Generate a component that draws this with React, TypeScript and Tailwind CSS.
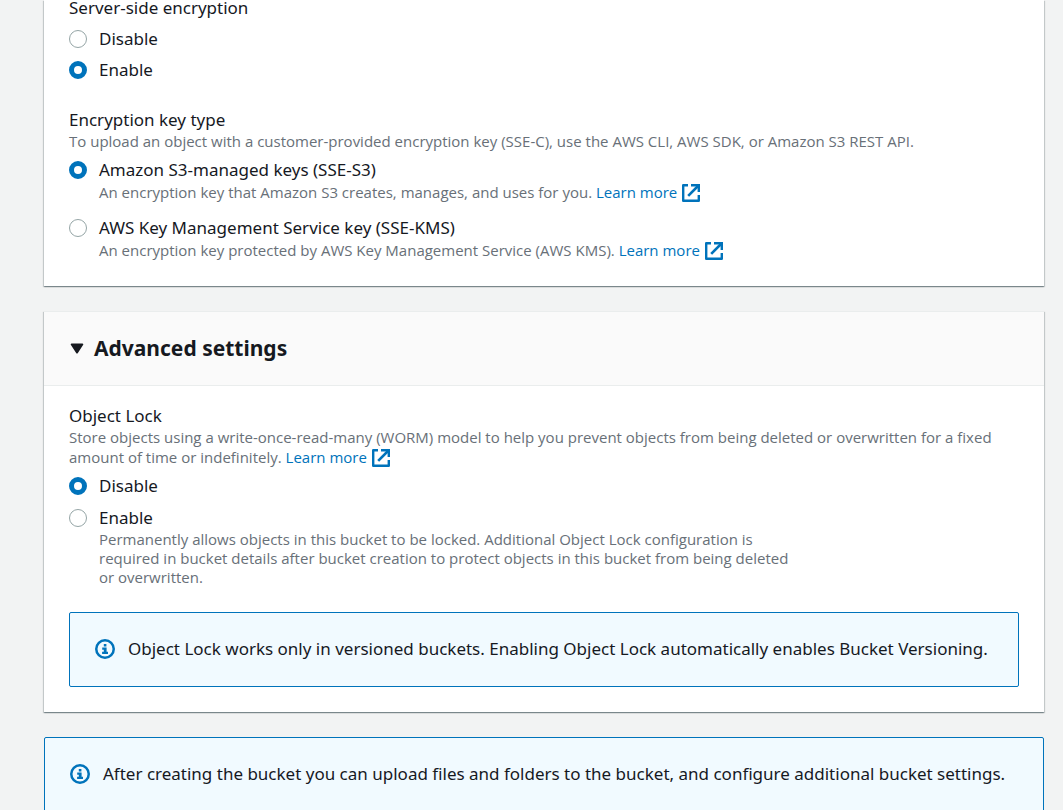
import React from 'react';

function ExternalIcon() {
  return (
    <svg aria-hidden="true" viewBox="0 0 18 18" className="ml-[5px] inline-block size-[18px] align-[-4px]" fill="none" stroke="currentColor" strokeWidth="2.4">
      <path d="M6 1.200H1.200v15.600h15.600V11" strokeLinejoin="round" />
      <path d="M9 1.200h7.800V8" />
      <path d="M16.500 1.500 6.200 11.800" strokeWidth="2.600" />
    </svg>
  );
}

function InfoIcon() {
  return (
    <svg aria-hidden="true" viewBox="0 0 20 20" className="size-5 shrink-0 text-[#0073bb]" fill="none" stroke="currentColor">
      <circle cx="10" cy="10" r="8.750" strokeWidth="2.500" />
      <path d="M8.800 5h2.600v2.400H8.800zM7.200 8.500h4.400v4.300h1.400V15H7.100v-2.200h1.700v-2.100H7.200z" fill="currentColor" stroke="none" />
    </svg>
  );
}

function LearnMore() {
  return (
    <a href="#learn-more" className="whitespace-nowrap text-[#0073bb]">
      Learn more
      <ExternalIcon />
    </a>
  );
}

interface RadioProps {
  name: string;
  id: string;
  label: string;
  checked?: boolean;
  hint?: React.ReactNode;
  hintClass?: string;
}

function Radio({ name, id, label, checked, hint, hintClass }: RadioProps) {
  return (
    <div className="grid grid-cols-[18px_1fr] items-center gap-x-3">
      <input
        type="radio"
        id={id}
        name={name}
        defaultChecked={checked}
        className="size-[18px] appearance-none rounded-full border border-[#95a5a6] bg-white checked:border-[5px] checked:border-[#0073bb]"
      />
      <label htmlFor={id} className="text-[17px] leading-6">{label}</label>
      {hint && <p className={`col-start-2 max-w-[690px] font-['Open_Sans',sans-serif] text-[15px] text-[#687078] ${hintClass}`}>{hint}</p>}
    </div>
  );
}

function Alert({ children }: { children: React.ReactNode }) {
  return (
    <div className="flex items-center gap-[13px] rounded-xs border border-[#0073bb] bg-[#f1faff] px-[25px] pt-6 pb-[25px]">
      <InfoIcon />
      <p className="text-[17px] leading-6">{children}</p>
    </div>
  );
}

const cardClass =
  'bg-white shadow-[0_1px_1px_0_rgba(0,28,36,0.3),1px_1px_1px_0_rgba(0,28,36,0.15),-1px_1px_1px_0_rgba(0,28,36,0.15)]';

export default function App() {
  return (
    <main className="flex min-h-screen flex-col gap-[25px] bg-[#f2f3f3] pr-[19px] pl-11 font-['Noto_Sans',sans-serif] text-[#16191f]">
      <section className={`${cardClass} px-[25px] pb-[26px]`}>
        <fieldset>
          <legend className="text-[17px] leading-4">Server-side encryption</legend>
          <div className="mt-[11px] flex flex-col gap-[7px]">
            <Radio name="encryption" id="encryption-disable" label="Disable" />
            <Radio name="encryption" id="encryption-enable" label="Enable" checked />
          </div>
        </fieldset>
        <fieldset className="mt-[30px]">
          <legend className="text-[17px] leading-4">Encryption key type</legend>
          <p className="mt-[3px] font-['Open_Sans',sans-serif] text-[15px] leading-5 text-[#687078]">
            To upload an object with a customer-provided encryption key (SSE-C), use the AWS CLI, AWS SDK, or Amazon S3 REST API.
          </p>
          <div className="mt-[7px] flex flex-col gap-3.5">
            <Radio
              name="key-type"
              id="key-sse-s3"
              label="Amazon S3-managed keys (SSE-S3)"
              checked
              hintClass="leading-5"
              hint={<>An encryption key that Amazon S3 creates, manages, and uses for you. <LearnMore /></>}
            />
            <Radio
              name="key-type"
              id="key-sse-kms"
              label="AWS Key Management Service key (SSE-KMS)"
              hintClass="leading-5"
              hint={<>An encryption key protected by AWS Key Management Service (AWS KMS). <LearnMore /></>}
            />
          </div>
        </fieldset>
      </section>

      <section className={`${cardClass} border-t border-[#eaeded]`}>
        <h2 className="border-b border-[#eaeded] bg-[#fafafa]">
          <button type="button" aria-expanded="true" className="flex w-full items-center gap-2.5 px-[26px] py-[22px] text-left text-[21px] leading-[29px] font-bold">
            <svg aria-hidden="true" viewBox="0 0 14 12" className="h-3 w-3.5" fill="currentColor">
              <path d="M1.500 .5h11a.8.8 0 0 1 .7 1.200l-5.500 8.500a.8.8 0 0 1-1.400 0L.8 1.700A.8.8 0 0 1 1.500 .5z" />
            </svg>
            Advanced settings
          </button>
        </h2>
        <div className="px-[25px] pt-[22px] pb-[25px]">
          <fieldset>
            <legend className="text-[17px] leading-4">Object Lock</legend>
            <p className="mt-[3px] font-['Open_Sans',sans-serif] text-[15px] leading-5 text-[#687078]">
              Store objects using a write-once-read-many (WORM) model to help you prevent objects from being deleted or overwritten for a fixed amount of time or indefinitely. <LearnMore />
            </p>
            <div className="mt-[7px] flex flex-col gap-2">
              <Radio name="object-lock" id="lock-disable" label="Disable" checked />
              <Radio
                name="object-lock"
                id="lock-enable"
                label="Enable"
                hintClass="leading-[19px]"
                hint="Permanently allows objects in this bucket to be locked. Additional Object Lock configuration is required in bucket details after bucket creation to protect objects in this bucket from being deleted or overwritten."
              />
            </div>
          </fieldset>
          <div className="mt-[25px]">
            <Alert>Object Lock works only in versioned buckets. Enabling Object Lock automatically enables Bucket Versioning.</Alert>
          </div>
        </div>
      </section>

      <Alert>After creating the bucket you can upload files and folders to the bucket, and configure additional bucket settings.</Alert>
    </main>
  );
}
